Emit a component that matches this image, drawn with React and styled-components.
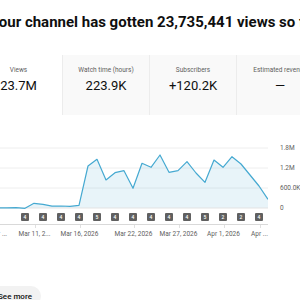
import React from 'react';
import styled, { createGlobalStyle } from 'styled-components';

const GlobalStyle = createGlobalStyle`
  html, body {
    margin: 0;
    padding: 0;
    background: #fff;
    overflow: hidden;
  }
  body {
    font-family: Roboto, "Noto Sans", Arial, sans-serif;
    color: #0f0f0f;
  }
`;

const Page = styled.div`
  width: 350px;
  margin-left: -25px;
  padding-top: 12px;
`;

const Title = styled.h1`
  margin: 0;
  padding-left: 15px;
  font-size: 15px;
  line-height: 20px;
  font-weight: 700;
  white-space: nowrap;
`;

const Tabs = styled.div`
  display: flex;
  margin-top: 23px;
  height: 60px;
`;

const Tab = styled.div`
  width: 87px;
  flex: none;
  display: flex;
  flex-direction: column;
  align-items: center;
  padding-top: 11px;
  box-sizing: border-box;
  background: ${(p) => (p.$active ? '#fff' : '#f9f9f9')};
  border-left: ${(p) => (p.$active ? 'none' : '1px solid #ececec')};
`;

const TabLabel = styled.div`
  font-size: 6.5px;
  line-height: 8px;
  color: #606060;
  white-space: nowrap;
`;

const TabValue = styled.div`
  margin-top: 4px;
  font-size: 13px;
  line-height: 16px;
  color: #0f0f0f;
`;

const ChartRow = styled.div`
  display: flex;
  margin-top: 25px;
`;

const PlotColumn = styled.div`
  width: 293px;
  flex: none;
`;

const Plot = styled.svg`
  display: block;
`;

const Badges = styled.div`
  display: flex;
  gap: 10px;
  padding-left: 46px;
  margin-top: 1px;
`;

const Badge = styled.div`
  width: 8px;
  height: 8px;
  border-radius: 1px;
  background: #606060;
  color: #fff;
  font-size: 5px;
  line-height: 8px;
  text-align: center;
  font-weight: 500;
`;

const DateAxis = styled.div`
  position: relative;
  margin-top: 3px;
  height: 16px;
  border-top: 1px solid #d9d9d9;
`;

const Tick = styled.span`
  position: absolute;
  top: 0;
  width: 1px;
  height: 3px;
  background: #e0e0e0;
`;

const DateLabel = styled.span`
  position: absolute;
  top: 5px;
  transform: translateX(-50%);
  font-size: 6.5px;
  line-height: 8px;
  color: #606060;
  white-space: nowrap;
`;

const YAxis = styled.div`
  display: flex;
  flex-direction: column;
  padding-left: 12px;
  margin-top: -2px;
`;

const YLabel = styled.div`
  font-size: 6.5px;
  line-height: 20px;
  color: #606060;
  white-space: nowrap;
`;

const SeeMore = styled.button`
  display: block;
  margin: 45px 0 0 13px;
  height: 20px;
  padding: 0 9px 0 10px;
  border: none;
  border-radius: 10px;
  background: #f2f2f2;
  font-family: Roboto, Arial, sans-serif;
  font-size: 8px;
  font-weight: 500;
  color: #0f0f0f;
`;

const Divider = styled.div`
  margin-top: 13px;
  border-top: 1px solid #e5e5e5;
`;

const tabs = [
  { label: 'Views', value: '23.7M', active: true },
  { label: 'Watch time (hours)', value: '223.9K' },
  { label: 'Subscribers', value: '+120.2K' },
  { label: 'Estimated revenue', value: '—' },
];

const ys = [
  208, 207.8, 207.7, 208.3, 203.3, 204.3, 206.2, 206, 206.3, 205.3, 166, 159.3,
  180, 172.7, 170.7, 188.3, 163.3, 167.3, 155, 172.3, 170.7, 161.7, 173, 182.3,
  160, 167.3, 156.7, 164, 175, 186, 199.3,
];

const badges = [4, 4, 4, 4, 5, 4, 4, 4, 4, 4, 5, 2, 2, 4];

const dates = [
  { x: -2, text: 'Mar ...' },
  { x: 34.5, text: 'Mar 11, 2...' },
  { x: 79.5, text: 'Mar 16, 2026' },
  { x: 133.5, text: 'Mar 22, 2026' },
  { x: 178.5, text: 'Mar 27, 2026' },
  { x: 223.5, text: 'Apr 1, 2026' },
  { x: 259.5, text: 'Apr ...' },
];

const OFF = 25;
const TOP = 140;

const Chart = () => {
  const pts = ys.map((y, i) => [-2 + 9 * i + OFF, y - TOP]);
  const line = pts.map((p, i) => `${i ? 'L' : 'M'}${p[0]},${p[1]}`).join(' ');
  const area = `${line} L${pts[pts.length - 1][0]},68 L${pts[0][0]},68 Z`;

  return (
    <Plot width="293" height="72" viewBox="0 0 293 72">
      {[8, 28, 48].map((y) => (
        <line key={y} x1="0" x2="293" y1={y} y2={y} stroke="#eeeeee" strokeWidth="1" />
      ))}
      <path d={area} fill="rgba(65,166,208,0.12)" />
      <line x1="0" x2="293" y1="68" y2="68" stroke="#e3e3e3" strokeWidth="1" />
      <path d={line} fill="none" stroke="#45a9d1" strokeWidth="1.2" strokeLinejoin="round" />
    </Plot>
  );
};

const App = () => (
  <>
    <GlobalStyle />
    <Page>
      <Title>Your channel has gotten 23,735,441 views so far</Title>
      <Tabs>
        {tabs.map((t) => (
          <Tab key={t.label} $active={t.active}>
            <TabLabel>{t.label}</TabLabel>
            <TabValue>{t.value}</TabValue>
          </Tab>
        ))}
      </Tabs>
      <ChartRow>
        <PlotColumn>
          <Chart />
          <Badges>
            {badges.map((n, i) => (
              <Badge key={i}>{n}</Badge>
            ))}
          </Badges>
          <DateAxis>
            {dates.map((d) => (
              <React.Fragment key={d.text}>
                <Tick style={{ left: d.x + OFF }} />
                <DateLabel style={{ left: d.x + OFF }}>{d.text}</DateLabel>
              </React.Fragment>
            ))}
          </DateAxis>
        </PlotColumn>
        <YAxis>
          <YLabel>1.8M</YLabel>
          <YLabel>1.2M</YLabel>
          <YLabel>600.0K</YLabel>
          <YLabel>0</YLabel>
        </YAxis>
      </ChartRow>
      <SeeMore>See more</SeeMore>
      <Divider />
    </Page>
  </>
);

export default App;
